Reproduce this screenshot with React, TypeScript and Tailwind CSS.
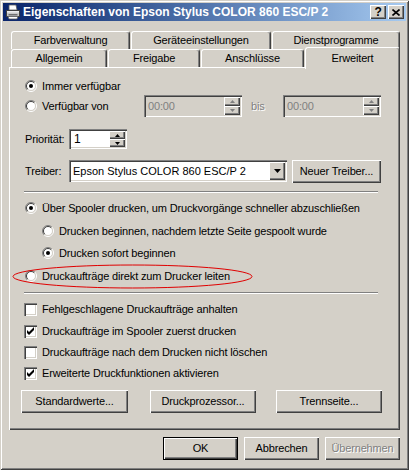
import React from 'react';

const raised = 'shadow-[inset_1px_1px_0_#fff,inset_-1px_-1px_0_#404040,inset_-2px_-2px_0_#808080]';
const sunken = 'shadow-[inset_1px_1px_0_#808080,inset_2px_2px_0_#404040,inset_-1px_-1px_0_#fff,inset_-2px_-2px_0_#d4d0c8]';
const tabBase =
  'h-[18px] flex items-center justify-center bg-[#d4d0c8] border-l border-t border-white border-r border-r-[#404040] rounded-t-[3px] shadow-[inset_-1px_0_0_#808080]';
const disabledText = 'text-[#808080] [text-shadow:1px_1px_0_#fff]';

const Radio = ({ checked }: { checked?: boolean }) => (
  <svg width="12" height="12" viewBox="0 0 12 12" className="shrink-0">
    <circle cx="6" cy="6" r="4.5" fill="#fff" />
    <path d="M 2.1 9.9 A 5.5 5.5 0 0 1 9.9 2.1" fill="none" stroke="#808080" />
    <path d="M 9.9 2.1 A 5.5 5.5 0 0 1 2.1 9.9" fill="none" stroke="#fff" />
    <path d="M 2.8 9.2 A 4.5 4.5 0 0 1 9.2 2.8" fill="none" stroke="#404040" />
    <path d="M 9.2 2.8 A 4.5 4.5 0 0 1 2.8 9.2" fill="none" stroke="#d4d0c8" />
    {checked && <circle cx="6" cy="6" r="2" fill="#000" />}
  </svg>
);

const Check = ({ checked }: { checked?: boolean }) => (
  <div className={`w-[13px] h-[13px] shrink-0 bg-white ${sunken}`}>
    {checked && (
      <svg width="13" height="13" viewBox="0 0 13 13">
        <polygon points="3,5 3,8 5,10 10,5 10,2 5,7" fill="#000" />
      </svg>
    )}
  </div>
);

const Arrow = ({ down, disabled }: { down?: boolean; disabled?: boolean }) => (
  <svg width="5" height="3" viewBox="0 0 5 3">
    {down ? (
      <polygon points="0,0 5,0 2.5,3" fill={disabled ? '#808080' : '#000'} />
    ) : (
      <polygon points="0,3 5,3 2.5,0" fill={disabled ? '#808080' : '#000'} />
    )}
  </svg>
);

const Spinner = ({ disabled }: { disabled?: boolean }) => (
  <div className="flex flex-col w-[16px] h-full">
    <div className={`flex-1 flex items-center justify-center bg-[#d4d0c8] ${raised}`}>
      <Arrow disabled={disabled} />
    </div>
    <div className={`flex-1 flex items-center justify-center bg-[#d4d0c8] ${raised}`}>
      <Arrow down disabled={disabled} />
    </div>
  </div>
);

const TimeBox = () => (
  <div className={`w-[98px] h-[22px] flex items-stretch p-[2px] bg-[#d4d0c8] ${sunken}`}>
    <div className="flex-1 flex items-center pl-[2px] text-[#808080]">00:00</div>
    <Spinner disabled />
  </div>
);

const Option = ({ label, checked, className }: { label: string; checked?: boolean; className: string }) => (
  <div className={`flex items-center h-[14px] gap-[5px] ${className}`}>
    <Radio checked={checked} />
    <span>{label}</span>
  </div>
);

const CheckRow = ({ label, checked, className }: { label: string; checked?: boolean; className: string }) => (
  <div className={`flex items-center h-[14px] gap-[5px] ml-[15px] ${className}`}>
    <Check checked={checked} />
    <span>{label}</span>
  </div>
);

const Btn = ({ label, className }: { label: string; className: string }) => (
  <div className={`h-[23px] flex items-center justify-center bg-[#d4d0c8] ${raised} ${className}`}>{label}</div>
);

const Separator = ({ className }: { className: string }) => (
  <div className={`ml-[15px] w-[354px] h-[2px] border-t border-t-[#808080] border-b border-b-white ${className}`} />
);

const PrinterIcon = () => (
  <svg width="16" height="16" viewBox="0 0 16 16">
    <polygon points="4,1 11,1 12,6 4,6" fill="#fff" stroke="#606060" strokeWidth="0.8" />
    <rect x="1.5" y="6.5" width="13" height="6" fill="#c8c8c8" stroke="#404040" />
    <rect x="2" y="7" width="12" height="1.5" fill="#eee" />
    <rect x="3.5" y="10" width="9" height="1.5" fill="#707070" />
    <polygon points="3,12.5 13,12.5 12,15 4,15" fill="#fff" stroke="#606060" strokeWidth="0.8" />
  </svg>
);

export default function App() {
  return (
    <div
      className="w-[409px] h-[470px] bg-[#d4d0c8] flex flex-col text-[11px] tracking-[-0.15px] text-black font-['Liberation_Sans',Arial,sans-serif] shadow-[inset_1px_1px_0_#d4d0c8,inset_-1px_-1px_0_#404040,inset_2px_2px_0_#fff,inset_-2px_-2px_0_#808080] select-none"
    >
      {/* title bar */}
      <div className="mx-[3px] mt-[3px] h-[18px] flex items-center bg-gradient-to-r from-[#0a246a] to-[#a6caf0]">
        <div className="ml-[2px] w-[16px] h-[16px]">
          <PrinterIcon />
        </div>
        <span className="ml-[2px] text-white font-bold text-[12px] tracking-normal">Eigenschaften von Epson Stylus COLOR 860 ESC/P 2</span>
        <div className="ml-auto mr-[2px] flex items-center gap-[2px]">
          <div className={`w-[16px] h-[14px] flex items-center justify-center bg-[#d4d0c8] ${raised} font-bold text-[12px] leading-none`}>
            ?
          </div>
          <div className={`w-[16px] h-[14px] flex items-center justify-center bg-[#d4d0c8] ${raised}`}>
            <svg width="8" height="7" viewBox="0 0 8 7">
              <path d="M0.5 0.5 L7.5 6.5 M7.5 0.5 L0.5 6.5" stroke="#000" strokeWidth="1.6" />
            </svg>
          </div>
        </div>
      </div>

      {/* tabs */}
      <div className="mt-[10px] flex ml-[11px] gap-[1px]">
        <div className={`${tabBase} w-[119px]`}>Farbverwaltung</div>
        <div className={`${tabBase} w-[140px]`}>Geräteeinstellungen</div>
        <div className={`${tabBase} w-[128px]`}>Dienstprogramme</div>
      </div>
      <div className="flex ml-[11px] gap-[1px] h-[18px] items-start">
        <div className={`${tabBase} w-[96px]`}>Allgemein</div>
        <div className={`${tabBase} w-[92px]`}>Freigabe</div>
        <div className={`${tabBase} w-[103px]`}>Anschlüsse</div>
        <div className={`${tabBase} w-[95px] h-[22px] -mt-[2px] relative z-10 items-start pt-[2px]`}>Erweitert</div>
      </div>

      {/* panel */}
      <div className={`relative ml-[9px] w-[391px] h-[363px] flex flex-col ${raised}`}>
        <Option label="Immer verfügbar" checked className="mt-[12px] ml-[16px]" />
        <div className="mt-[2px] h-[22px] flex items-center ml-[16px]">
          <div className="w-[119px] flex items-center gap-[5px]">
            <Radio />
            <span>Verfügbar von</span>
          </div>
          <TimeBox />
          <span className={`ml-[9px] w-[32px] ${disabledText}`}>bis</span>
          <TimeBox />
        </div>
        <div className="mt-[12px] h-[20px] flex items-center ml-[16px]">
          <span className="w-[44px]">Priorität:</span>
          <div className={`w-[58px] h-[20px] flex items-stretch p-[2px] bg-white ${sunken}`}>
            <div className="flex-1 flex items-center pl-[3px] text-[12px]">1</div>
            <Spinner />
          </div>
        </div>
        <div className="mt-[11px] h-[22px] flex items-center ml-[16px]">
          <span className="w-[44px]">Treiber:</span>
          <div className={`w-[218px] h-[22px] flex items-stretch p-[2px] bg-white ${sunken}`}>
            <div className="flex-1 flex items-center pl-[2px] text-[11px] tracking-normal">Epson Stylus COLOR 860 ESC/P 2</div>
            <div className={`w-[16px] flex items-center justify-center bg-[#d4d0c8] ${raised}`}>
              <svg width="7" height="4" viewBox="0 0 7 4">
                <polygon points="0,0 7,0 3.5,4" fill="#000" />
              </svg>
            </div>
          </div>
          <Btn label="Neuer Treiber..." className="ml-[5px] w-[89px] h-[22px]" />
        </div>
        <Separator className="mt-[9px]" />
        <Option label="Über Spooler drucken, um Druckvorgänge schneller abzuschließen" checked className="mt-[8px] ml-[16px]" />
        <Option label="Drucken beginnen, nachdem letzte Seite gespoolt wurde" className="mt-[9px] ml-[33px]" />
        <Option label="Drucken sofort beginnen" checked className="mt-[8px] ml-[33px]" />
        <Option label="Druckaufträge direkt zum Drucker leiten" className="mt-[9px] ml-[16px]" />
        <Separator className="mt-[9px]" />
        <CheckRow label="Fehlgeschlagene Druckaufträge anhalten" className="mt-[8px]" />
        <CheckRow label="Druckaufträge im Spooler zuerst drucken" checked className="mt-[8px]" />
        <CheckRow label="Druckaufträge nach dem Drucken nicht löschen" className="mt-[7px]" />
        <CheckRow label="Erweiterte Druckfunktionen aktivieren" checked className="mt-[7px]" />
        <div className="mt-[10px] flex">
          <Btn label="Standardwerte..." className="ml-[12px] w-[107px]" />
          <Btn label="Druckprozessor..." className="ml-[22px] w-[106px]" />
          <Btn label="Trennseite..." className="ml-[20px] w-[106px]" />
        </div>

        {/* red annotation ellipse */}
        <svg className="absolute left-[3px] top-[197px]" width="241" height="25" viewBox="0 0 241 25">
          <ellipse cx="120.5" cy="12.5" rx="119.5" ry="11.5" fill="none" stroke="#e00000" />
        </svg>
      </div>

      {/* dialog buttons */}
      <div className="mt-[7px] flex">
        <div className="ml-[163px] w-[75px] h-[23px] border border-black">
          <div className={`w-full h-full flex items-center justify-center bg-[#d4d0c8] ${raised}`}>OK</div>
        </div>
        <Btn label="Abbrechen" className="ml-[6px] w-[75px]" />
        <Btn label="Übernehmen" className={`ml-[6px] w-[75px] ${disabledText}`} />
      </div>
    </div>
  );
}
